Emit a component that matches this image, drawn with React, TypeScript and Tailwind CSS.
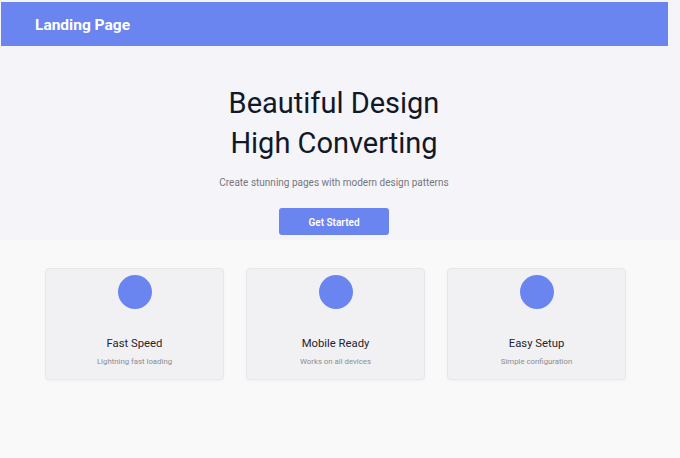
const features = [
  { title: "Fast Speed", desc: "Lightning fast loading" },
  { title: "Mobile Ready", desc: "Works on all devices" },
  { title: "Easy Setup", desc: "Simple configuration" },
];

export default function App() {
  return (
    <div
      className="min-h-screen w-[680px] bg-[#f9f9f9]"
      style={{ fontFamily: "Roboto, 'Noto Sans', sans-serif" }}
    >
      <section className="bg-[#f4f4f9] pt-[2px] pb-[5px]">
        <header className="ml-[1px] flex h-[44px] w-[667px] items-center bg-[#6a85ef] pt-[3px] pl-[34px]">
          <h1 className="text-[15.5px] font-bold text-white">Landing Page</h1>
        </header>
        <div className="flex flex-col items-center pt-[37px] pr-[12px]">
          <h2 className="text-center text-[29px] leading-[40px] font-normal text-[#111827]">
            Beautiful Design
            <br />
            High Converting
          </h2>
          <p className="mt-[12px] text-[10px] leading-[16px] text-[#74767d]">
            Create stunning pages with modern design patterns
          </p>
          <button className="mt-[17px] h-[27px] w-[110px] rounded-[3px] bg-[#6a85ef] pt-[1px] text-[10px] font-semibold text-white">
            Get Started
          </button>
        </div>
      </section>
      <section className="flex gap-[22px] pt-[28px] pl-[45px]">
        {features.map((f) => (
          <div
            key={f.title}
            className="flex h-[112px] w-[179px] flex-col items-center rounded-[4px] border border-[#e8e8ec] bg-[#f1f1f4] pt-[6px] shadow-[0_1px_3px_rgba(0,0,0,0.04)]"
          >
            <div className="h-[34px] w-[34px] shrink-0 rounded-full bg-[#6a85ef]" />
            <h3 className="mt-[26px] text-[11.3px] leading-[18px] text-[#1f2430]">
              {f.title}
            </h3>
            <p className="mt-[3px] text-[7.8px] leading-[12px] text-[#8a8c93]">
              {f.desc}
            </p>
          </div>
        ))}
      </section>
    </div>
  );
}
